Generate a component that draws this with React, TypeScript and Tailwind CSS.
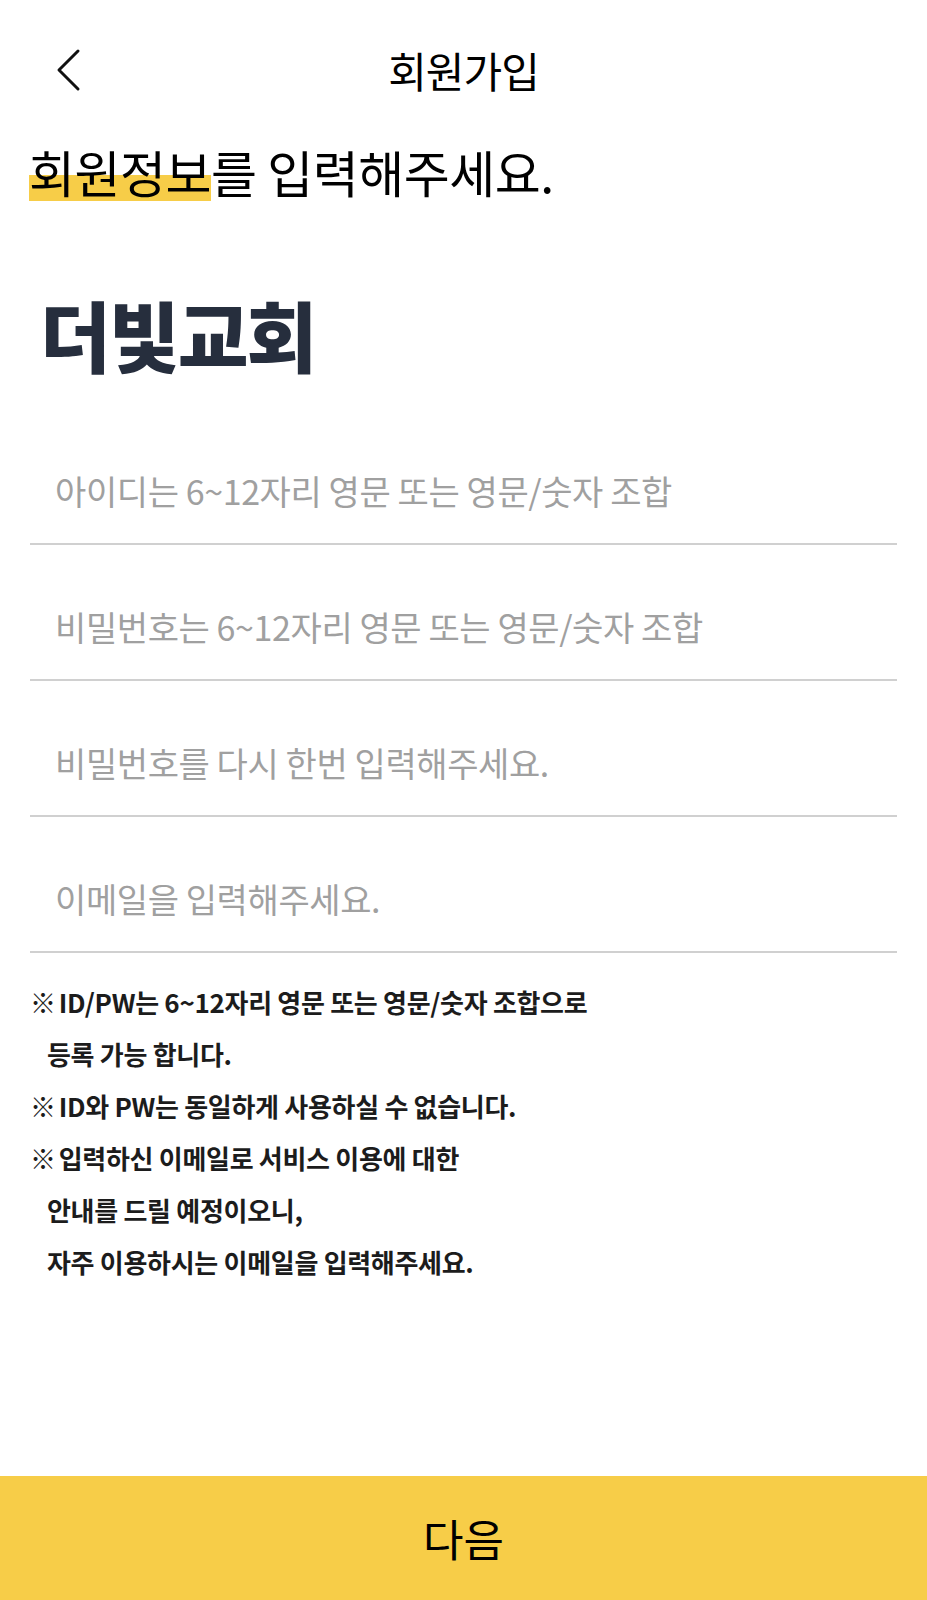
import React from "react";

const FIELDS = [
  "아이디는 6~12자리 영문 또는 영문/숫자 조합",
  "비밀번호는 6~12자리 영문 또는 영문/숫자 조합",
  "비밀번호를 다시 한번 입력해주세요.",
  "이메일을 입력해주세요.",
];

const NOTES = [
  { mark: true, text: "ID/PW는 6~12자리 영문 또는 영문/숫자 조합으로" },
  { mark: false, text: "등록 가능 합니다." },
  { mark: true, text: "ID와 PW는 동일하게 사용하실 수 없습니다." },
  { mark: true, text: "입력하신 이메일로 서비스 이용에 대한" },
  { mark: false, text: "안내를 드릴 예정이오니," },
  { mark: false, text: "자주 이용하시는 이메일을 입력해주세요." },
];

export default function App() {
  return (
    <div
      className="min-h-screen flex flex-col bg-white text-black"
      style={{ fontFamily: '"Noto Sans CJK KR", "Noto Sans", sans-serif' }}
    >
      {/* Header */}
      <header className="relative flex items-center justify-center h-[50px] mt-[45px]">
        <button className="absolute left-[50px] top-1/2 -translate-y-1/2 p-1">
          <svg width="28" height="44" viewBox="0 0 28 44" fill="none">
            <path d="M24 3 L5 22 L24 41" stroke="#111" strokeWidth="3" strokeLinecap="round" strokeLinejoin="round" />
          </svg>
        </button>
        <h1 className="text-[42px] leading-[50px] font-normal tracking-[-1px]">회원가입</h1>
      </header>

      {/* Heading */}
      <div className="px-[29px] mt-[46px]">
        <h2 className="text-[50px] leading-[60px] font-normal tracking-[-0.5px]">
          <span className="bg-[linear-gradient(transparent_55%,#f7cd48_55%,#f7cd48_92%,transparent_92%)]">회원정보</span>를 입력해주세요.
        </h2>
      </div>

      {/* Logo */}
      <div className="px-[40px] mt-[88px]">
        <div className="text-[77px] leading-[90px] font-black tracking-[-2px] text-[#262e3d]">더빛교회</div>
      </div>

      {/* Inputs */}
      <div className="px-[30px] mt-[30px] flex flex-col">
        {FIELDS.map((f) => (
          <div key={f} className="h-[136px] flex items-end border-b-2 border-[#d0d0d0]">
            <input
              placeholder={f}
              className="w-full h-[105px] pl-[25px] text-[34px] tracking-[-0.4px] outline-none placeholder:text-[#a0a0a0] bg-transparent"
            />
          </div>
        ))}
      </div>

      {/* Notes */}
      <div className="px-[30px] mt-[22px] flex flex-col">
        {NOTES.map((n) => (
          <div key={n.text} className="h-[52px] flex items-center text-[26px] font-bold tracking-[-0.3px] text-[#1c1c1c]">
            {n.mark ? <span className="mr-[3px]">※</span> : <span className="w-[17px]" />}
            <span>{n.text}</span>
          </div>
        ))}
      </div>

      {/* Bottom button */}
      <button className="mt-auto h-[124px] w-full bg-[#f7cd48] flex items-center justify-center text-[44px] font-normal text-black">
        다음
      </button>
    </div>
  );
}
